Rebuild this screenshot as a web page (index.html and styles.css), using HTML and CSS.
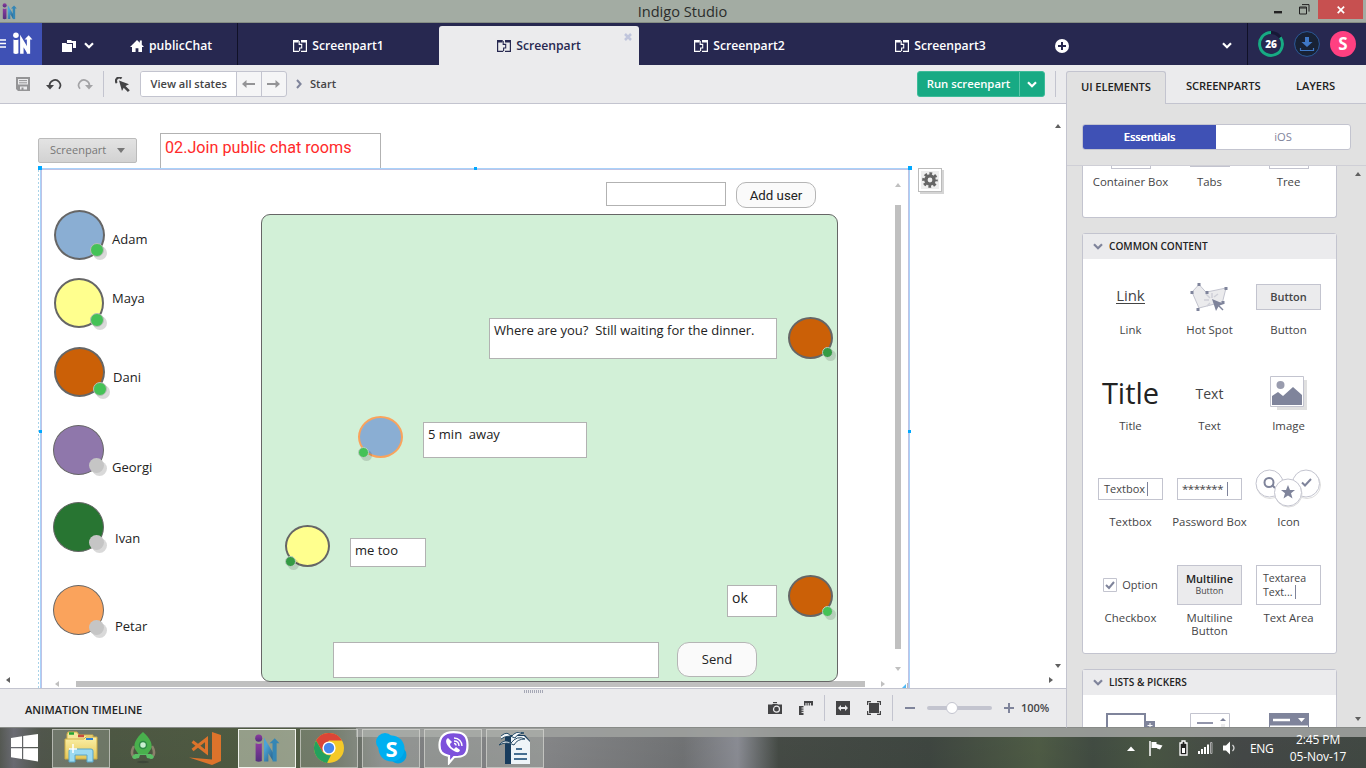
FILE: index.html
```html
<!DOCTYPE html>
<html lang="en">
<head>
<meta charset="utf-8">
<title>Indigo Studio</title>
<link rel="stylesheet" href="styles.css">
</head>
<body>
<svg class="defs" width="0" height="0">
  <defs>
    <linearGradient id="purple" x1="0" y1="0" x2="0" y2="1"><stop offset="0" stop-color="#8d3aa0"/><stop offset="1" stop-color="#54307e"/></linearGradient>
    <linearGradient id="blue" x1="0" y1="0" x2="1" y2="1"><stop offset="0" stop-color="#4ba3d6"/><stop offset="1" stop-color="#24587f"/></linearGradient>
    <linearGradient id="folder" x1="0" y1="0" x2="0" y2="1"><stop offset="0" stop-color="#fbf0a8"/><stop offset="1" stop-color="#e5c757"/></linearGradient>
    <symbol id="logo" viewBox="0 0 24 28">
      <circle class="l1" cx="4" cy="4" r="3.4"/>
      <path class="l1" d="M1 9c2 1 4 1 6 0v17c-2 1-4 1-6 0z"/>
      <path class="l2" d="M11.200 26.500V11l7.800 13" fill="none" stroke-width="4.200"/>
      <path class="l4" d="M19.300 26.500V7" fill="none" stroke-width="4"/>
      <path class="l3" d="M14.500 9l5-5 4.500 5z"/>
    </symbol>
    <symbol id="part" viewBox="0 0 14 12">
      <path d="M5.500.7H.6v10.700h5.600M8 .7h5.400v10.700H8" fill="none" stroke="currentColor" stroke-width="1.200"/>
      <path d="M6.200 1v3.400h2.500v3.600H6.600v3" fill="none" stroke="currentColor" stroke-width="1.100"/>
      <path d="M0 0h5.500v2.500H0zM8 0h6v2.500H8z" fill="currentColor"/>
    </symbol>
    <symbol id="chev" viewBox="0 0 10 7"><path d="M1 1.200l4 4 4-4" fill="none" stroke="currentColor" stroke-width="2.200"/></symbol>
  </defs>
</svg>

<div class="window">
  <header class="titlebar">
    <svg class="app-icon" width="17" height="17"><use href="#logo"/></svg>
    <span class="title">Indigo Studio</span>
    <svg class="win-min" width="9" height="3"><rect width="8" height="2.400" fill="#222"/></svg>
    <svg class="win-max" width="11" height="11"><path d="M.5 3h7v7h-7zM.5 4h7M3 .6h7v7" fill="none" stroke="#222"/></svg>
    <span class="win-close"><svg width="8" height="8"><path d="M.7.7l6.400 6.400M7.100.7L.7 7.100" stroke="#fff" stroke-width="1.700"/></svg></span>
  </header>

  <nav class="nav">
    <div class="brand">
      <svg width="6" height="10"><path d="M0 1h6M0 4.500h6M0 8h6" stroke="#fff" stroke-width="1.700"/></svg>
      <svg class="brand-logo" width="21" height="23"><use href="#logo"/></svg>
    </div>
    <div class="project">
      <svg class="folders" width="14" height="12"><path d="M0 3h4l1 1h5v8H0zM5 0h4l1 1h4v7h-3V3H5z" fill="#fff"/></svg>
      <svg class="chev1" width="10" height="7"><use href="#chev"/></svg>
      <svg class="home" width="14" height="12"><path d="M0 7l7-7 2.800 2.800V.6h2v4.200L14 7h-2v5H8.400V8.300H5.600V12H2V7z" fill="#fff"/></svg>
      <span>publicChat</span>
    </div>
    <div class="tab"><svg width="14" height="12"><use href="#part"/></svg><span>Screenpart1</span></div>
    <div class="tab active"><svg width="14" height="12"><use href="#part"/></svg><span>Screenpart</span>
      <svg class="tab-x" width="8" height="8"><path d="M1 1l6 6M7 1L1 7" stroke="#c0c5dc" stroke-width="2.500"/></svg></div>
    <div class="tab"><svg width="14" height="12"><use href="#part"/></svg><span>Screenpart2</span></div>
    <div class="tab"><svg width="14" height="12"><use href="#part"/></svg><span>Screenpart3</span></div>
    <svg class="plus" width="14" height="14"><circle cx="7" cy="7" r="7" fill="#fff"/><path d="M3 7h8M7 3v8" stroke="#272850" stroke-width="2"/></svg>
    <svg class="chev2" width="10" height="7"><use href="#chev"/></svg>
    <div class="account">
      <div class="days"><svg width="26" height="26"><circle cx="13" cy="13" r="11.400" fill="none" stroke="#161836" stroke-width="3"/><path d="M13 1.600A11.400 11.400 0 1 0 22.300 6.400" fill="none" stroke="#18aa84" stroke-width="3"/></svg><b>26</b></div>
      <svg width="26" height="26"><circle cx="13" cy="13" r="12.400" fill="#182235" stroke="#2c5a99"/><path d="M11 6h4v5h3.500L13 16 7.500 11H11z" fill="#3f78c6"/><path d="M6.500 17v2.500h13V17" fill="none" stroke="#3f78c6" stroke-width="1.200"/></svg>
      <div class="avatar">S</div>
    </div>
  </nav>

  <div class="body">
    <main class="work">
      <div class="toolbar">
        <svg class="save" width="14" height="14"><path d="M0 0h14v14H2l-2-2zM2 2v5.500h10V2zM4 9.500V12.500h1.500v-2h2v2H11v-3z" fill="#949496" fill-rule="evenodd"/><path d="M3 3.600h8M3 5.800h8" stroke="#949496"/></svg>
        <svg class="undo" width="17" height="13"><path d="M4 9A5.300 5.300 0 1 1 13 10.800" fill="none" stroke="#444446" stroke-width="1.700"/><path d="M0 7h8l-4 4.500z" fill="#444446"/></svg>
        <svg class="redo" width="17" height="13"><path d="M13 9A5.300 5.300 0 1 0 4 10.800" fill="none" stroke="#a3a3a6" stroke-width="1.700"/><path d="M17 7H9l4 4.500z" fill="#a3a3a6"/></svg>
        <i class="divider d1"></i>
        <svg class="pointer" width="15" height="15"><path d="M4 3.500l10 3.800-3.500 1.600 4.300 4.300-1.900 1.800-4.200-4.200L7 14z" fill="#444446"/><path d="M1.800 6A3 3 0 0 1 6.500 1.600" fill="none" stroke="#444446" stroke-width="2.200"/></svg>
        <div class="states">
          <span class="view">View all states</span>
          <span class="arrow"><svg width="14" height="8"><path d="M0 4l4.500-4v3H13v2H4.500v3z" fill="#949496"/></svg></span>
          <span class="arrow"><svg width="14" height="8"><path d="M13 4L8.500 0v3H0v2h8.500v3z" fill="#949496"/></svg></span>
        </div>
        <svg class="crumb" width="6" height="10"><path d="M1 1l3.600 4L1 9" fill="none" stroke="#7f849b" stroke-width="2"/></svg>
        <span class="start">Start</span>
        <div class="run"><span>Run screenpart</span><i><svg width="10" height="7"><use href="#chev"/></svg></i></div>
        <i class="divider d2"></i>
      </div>

      <section class="canvas">
        <div class="selector">Screenpart<svg width="8" height="5"><path d="M0 0h8L4 5z" fill="#777"/></svg></div>
        <div class="heading">02.Join public chat rooms</div>
        <div class="dots"></div>
        <div class="frame"></div>
        <i class="handle h1"></i><i class="handle h2"></i><i class="handle h3"></i><i class="handle h4"></i><i class="handle h5"></i>
        <div class="gear"><svg width="18" height="18" viewBox="-9 -9 18 18"><circle r="4.100" fill="none" stroke="#666" stroke-width="3.400"/><circle r="6.300" fill="none" stroke="#666" stroke-width="3" stroke-dasharray="2.700 2.248" stroke-dashoffset="1.350"/></svg></div>

        <div class="user adam"></div><i class="status on s1"></i><span class="name n1">Adam</span>
        <div class="user maya"></div><i class="status on s2"></i><span class="name n2">Maya</span>
        <div class="user dani"></div><i class="status on s3"></i><span class="name n3">Dani</span>
        <div class="user thin georgi"></div><i class="status s4"></i><span class="name n4">Georgi</span>
        <div class="user thin ivan"></div><i class="status s5"></i><span class="name n5">Ivan</span>
        <div class="user thin petar"></div><i class="status s6"></i><span class="name n6">Petar</span>

        <i class="vbar"></i><i class="hbar"></i>
        <div class="field adduser-field"></div>
        <div class="pill adduser">Add user</div>
        <div class="room"></div>
        <div class="field msg m1">Where are you?&nbsp; Still waiting for the dinner.</div>
        <div class="field msg m2">5 min&nbsp; away</div>
        <div class="field msg m3">me too</div>
        <div class="field msg m4">ok</div>
        <div class="field m5"></div>
        <div class="pill send">Send</div>
        <div class="face f1"></div><i class="dot dark p1"></i>
        <div class="face f2"></div><i class="dot p2"></i>
        <div class="face f3"></div><i class="dot dark p3"></i>
        <div class="face f4"></div><i class="dot p4"></i>

        <i class="tri up light t1"></i><i class="tri down light t2"></i><i class="tri left light t3"></i><i class="tri right light t4"></i>
        <i class="tri up t5"></i><i class="tri down t6"></i><i class="tri left t7"></i><i class="tri right t8"></i>
        <svg class="corner" width="6" height="5"><path d="M0 5l4-4v4z" fill="#4fb8f5"/><path d="M5.500 0v5" stroke="#bbb"/></svg>
      </section>

      <footer class="timeline">
        <span class="tl-title">ANIMATION TIMELINE</span>
        <i class="grip"></i>
        <svg class="camera" width="14" height="12"><path d="M0 2.500h3.800L5 2h4l1.200.5H14V12H0z" fill="#444446"/><path d="M5 .6h4" stroke="#444446" stroke-width="1.200"/><circle cx="8.500" cy="7.200" r="3" fill="none" stroke="#ebebed" stroke-width="1.200"/></svg>
        <svg class="rulers" width="14" height="14"><path d="M5 0h9v4.500H5zM0 5h4.500v9H0z" fill="#444446"/><path d="M7 2v3M9.200 2v3M11.400 2v3M2.500 7h3M2.500 9.200h3M2.500 11.400h3" stroke="#ebebed"/></svg>
        <i class="divider"></i>
        <svg class="fitw" width="14" height="14"><rect width="14" height="14" fill="#444446"/><path d="M2 7l3-3v2h4V4l3 3-3 3V8H5v2z" fill="#ebebed"/></svg>
        <svg class="fitall" width="14" height="14"><path d="M.6 4V.6H4M10 .6h3.400V4M13.400 10v3.400H10M4 13.400H.6V10" fill="none" stroke="#444446" stroke-width="1.200"/><rect x="2" y="2" width="10" height="10" fill="#444446"/></svg>
        <i class="divider d4"></i>
        <svg class="minus" width="10" height="10"><path d="M0 5h10" stroke="#7f849b" stroke-width="2"/></svg>
        <div class="slider"><i></i></div>
        <svg class="zplus" width="10" height="10"><path d="M0 5h10M5 0v10" stroke="#7f849b" stroke-width="2"/></svg>
        <span class="zoom">100%</span>
      </footer>
    </main>

    <aside class="side">
      <div class="side-tabs"><span class="on">UI ELEMENTS</span><span class="two">SCREENPARTS</span><span class="three">LAYERS</span></div>
      <div class="seg-wrap"><div class="segment"><b>Essentials</b><span>iOS</span></div></div>
      <div class="scroller">
        <i class="tri up t9"></i><i class="tri down t10"></i>
        <section class="card first">
          <div><i class="stub"></i>Container Box</div><div><i class="stub solid"></i>Tabs</div><div><i class="stub"></i>Tree</div>
        </section>
        <section class="card common">
          <h3><svg width="10" height="7"><use href="#chev"/></svg>COMMON CONTENT</h3>
          <div class="grid">
            <div class="cell"><div class="pic"><span class="link">Link</span></div><p>Link</p></div>
            <div class="cell"><div class="pic"><svg width="40" height="34"><path d="M2 12L9 4.500l7 7.700L36 8l-3.500 14L9 28z" fill="#ebebed" stroke="#c3c4cf"/><path d="M22 13v5M14 20h5M16 14l4 4M28 14l-4 3M17 26l3-3" stroke="#cfd0d8" stroke-width="1.500"/><path d="M7.500 3h3v3h-3zM.5 11h3v3h-3zM15.500 11h3v3h-3zM34.500 7h3v3h-3zM31.500 21h3v3h-3zM6.500 28h3v3h-3z" fill="#7f849b"/><path d="M22 19l12 5-4.500 1.500 4 4-1 1-4-4L26 31z" fill="#7f849b"/></svg></div><p>Hot Spot</p></div>
            <div class="cell"><div class="pic"><span class="btn">Button</span></div><p>Button</p></div>
            <div class="cell"><div class="pic"><span class="big">Title</span></div><p>Title</p></div>
            <div class="cell"><div class="pic"><span class="txt">Text</span></div><p>Text</p></div>
            <div class="cell"><div class="pic"><svg width="37" height="34"><path d="M7 4h30v30H7z" fill="#e0e0e0"/><path d="M.5.5h33v30H.5z" fill="#fff" stroke="#c3c4cf"/><circle cx="10.500" cy="9" r="4" fill="#999cae"/><path d="M2 29V20l6-4 5 4 10-9 9 8v10z" fill="#7f849b"/></svg></div><p>Image</p></div>
            <div class="cell"><div class="pic"><span class="box">Textbox<i></i></span></div><p>Textbox</p></div>
            <div class="cell"><div class="pic"><span class="box pass">*******<i></i></span></div><p>Password Box</p></div>
            <div class="cell"><div class="pic"><svg class="icons" width="66" height="42"><g stroke="#c3c4cf" fill="#fff"><circle cx="15" cy="17" r="13.500" stroke="#ddd"/><circle cx="52" cy="17" r="13.500" stroke="#ddd"/><circle cx="14.500" cy="15.500" r="13.500"/><circle cx="51" cy="15.500" r="13.500"/><circle cx="33.500" cy="25.500" r="13.500" stroke="#ddd"/></g><circle cx="14" cy="14.500" r="4.500" fill="none" stroke="#7f849b" stroke-width="2"/><path d="M17 17l3 3" stroke="#7f849b" stroke-width="2"/><path d="M47 14.500l3 3 6-6.500" fill="none" stroke="#7f849b" stroke-width="2"/><circle cx="33" cy="24.500" r="13.500" fill="#fff" stroke="#c3c4cf"/><path d="M33 17l2 5h5l-4 3.300 1.500 5.200L33 27.500l-4.500 3 1.500-5.200-4-3.300h5z" fill="#7f849b"/></svg></div><p>Icon</p></div>
            <div class="cell"><div class="pic"><span class="check"><svg width="14" height="14"><path d="M.5.5h13v13H.5z" fill="#fff" stroke="#c3c4cf"/><path d="M3 7l3 3 5-6" fill="none" stroke="#7f849b" stroke-width="2"/></svg>Option</span></div><p>Checkbox</p></div>
            <div class="cell"><div class="pic"><span class="btn multi"><b>Multiline</b><small>Button</small></span></div><p>Multiline<br>Button</p></div>
            <div class="cell"><div class="pic"><span class="area">Textarea<br>Text...<i></i></span></div><p>Text Area</p></div>
          </div>
        </section>
        <section class="card lists">
          <h3><svg width="10" height="7"><use href="#chev"/></svg>LISTS &amp; PICKERS</h3>
          <div class="peek">
            <svg width="50" height="16"><path d="M1 16V1h38v15" fill="none" stroke="#7f849b" stroke-width="2"/><path d="M39 8h10v8H39z" fill="#7f849b"/><path d="M41.500 12.500h5M44 10v5" stroke="#fff"/></svg>
            <svg class="pk2" width="40" height="16"><path d="M.5 16V.5h39V16" fill="none" stroke="#c3c4cf"/><path d="M7 10h16" stroke="#9295aa" stroke-width="2"/><path d="M30 8l3-3 3 3z" fill="#7f849b"/><path d="M31 11h4v5h-4z" fill="#ebebed"/></svg>
            <svg class="pk3" width="40" height="16"><path d="M0 0h40v16H0z" fill="#7f849b"/><path d="M4 7h17" stroke="#fff" stroke-width="2.500"/><path d="M29 5h7l-3.500 4z" fill="#fff"/><path d="M1 12.500h38V16H1z" fill="#fff"/></svg>
          </div>
        </section>
      </div>
    </aside>
  </div>

  <div class="taskbar">
    <div class="glass"></div>
    <div class="task win"><svg width="27" height="28"><path d="M0 4l11-1.700V13H0zM12.200 2.100L27 0v13H12.200zM0 14.200h11V25L0 23.300zM12.200 14.200H27V27.400L12.200 25z" fill="#fff"/></svg></div>
    <div class="task open"><svg width="34" height="34"><path d="M3 3l1-2h9l2 3h14v22H3z" fill="#f5e79b" stroke="#cfae45"/><path d="M5 2.500h5" stroke="#23a434" stroke-width="2.500"/><path d="M14 5h6" stroke="#c94b3c" stroke-width="2.500"/><path d="M1 8h19l2-2h11v22H1z" fill="url(#folder)" stroke="#cfae45"/><path d="M22 8h7" stroke="#2f7fd0" stroke-width="2"/><path d="M5 31V20q0-2 2-2h20q2 0 2 2v11h-6v-7H11v7z" fill="#9cdaf0" stroke="#5ba6c8"/><path d="M9 13v9M5 18h8" stroke="#fff" stroke-width="1.500"/></svg></div>
    <div class="task"><svg width="26" height="34"><path d="M4 15q-5 9 2 12M22 15q5 9-2 12" fill="none" stroke="#8b806b" stroke-width="2.500"/><path d="M13 1c7 6 10 12 8 17l-4 6H9l-4-6C3 13 6 7 13 1z" fill="#49b04d"/><path d="M5 23q-5 3-1 5l5-1 1-3h6l1 3 5 1q4-2-1-5z" fill="#59bf65"/><circle cx="13" cy="14" r="3.500" fill="#c9efd1" stroke="#2e8b45" stroke-width="1.500"/><ellipse cx="13" cy="31" rx="6" ry="1.200" fill="#3e4639"/></svg></div>
    <div class="task"><svg width="33" height="33"><path d="M23 0l9 3v26l-9 4L0 25.500l23 2z" fill="#dd732b"/><path d="M3.500 9.500l14 11V7L3.500 18" fill="none" stroke="#dd732b" stroke-width="3"/></svg></div>
    <div class="task open current"><svg width="26" height="29"><use href="#logo"/></svg></div>
    <div class="task open"><svg width="30" height="30" viewBox="-15 -15 30 30"><circle r="15" fill="#f4c928"/><path d="M-13-7.500A15 15 0 0 1 13-7.500H0L-6.500 3.800z" fill="#db4537"/><path d="M-13-7.500L-6.500 3.800Q-3 8 2 7L-2 14.900A15 15 0 0 1-13-7.500z" fill="#24a15d"/><circle r="6.600" fill="#fff"/><circle r="5.200" fill="#4687ee"/></svg></div>
    <div class="task open"><svg width="31" height="31"><circle cx="9" cy="9" r="9" fill="#00aff0"/><circle cx="22" cy="22" r="8.500" fill="#00a2e4"/><circle cx="15.500" cy="15.500" r="13" fill="#00aff0"/><text x="15.500" y="23.500" text-anchor="middle" class="skype">S</text></svg></div>
    <div class="task open"><svg width="31" height="34"><path d="M15.500 1.200C25 1.200 29.500 4 29.500 14S26 26 16 26l-5 6v-7C4 23.500 1.500 21 1.500 14S5 1.200 15.500 1.200z" fill="#7d51dc" stroke="#fff" stroke-width="2.200"/><path d="M10 7c-4 2-1 8 3 11s8 5 9 1l-4-3-2 2c-2-1-4-3-4-5l2-2z" fill="#fff"/><path d="M16 7c5 0 8 4 8 8M16 10c3 0 5 2 5 5M16 12.500q2 0 2 2" fill="none" stroke="#fff" stroke-width="1.400"/></svg></div>
    <div class="task open"><svg width="33" height="33"><path d="M6 3h20l5 6v23H6z" fill="#183c5d"/><path d="M12 4h13l6 6v22H12z" fill="#eef4f8"/><path d="M17 17h6M15 22h13M15 27h13" stroke="#456e91" stroke-width="2"/><path d="M2 4q7-6 10 1 5-7 13-4-7 1-9 5-7-4-14 1M0 13q6-7 12-2 6-8 14-4-8 0-11 6-7-4-15 0z" fill="#f5f8fa" stroke="#244965"/></svg></div>
    <div class="tray">
      <svg class="tr1" width="8" height="5"><path d="M0 5l4-4.500L8 5z" fill="#fff"/></svg>
      <svg class="tr2" width="15" height="15"><path d="M1 0v15" stroke="#fff" stroke-width="1.500"/><path d="M2.500 1h5v2l6 1.500-2.500 4-3-1V7h-5.500z" fill="#fff"/></svg>
      <svg class="tr3" width="9" height="16"><path d="M3 1h3v2h2v12H1V3h2z" fill="#222" stroke="#fff" stroke-width="1.300"/><path d="M3 8h3v5H3z" fill="#fff"/></svg>
      <svg class="tr4" width="15" height="12"><path d="M0 9h2v3H0zM3 7h2v5H3zM6 5h2v7H6zM9 2.500h2V12H9z" fill="#fff"/><path d="M12.500.5h1.500v11h-1.500z" fill="none" stroke="#aaa"/></svg>
      <svg class="tr5" width="13" height="14"><path d="M0 4.500h3L7 .5v13l-4-4H0z" fill="#fff"/><path d="M9.500 4q3 3 0 6" fill="none" stroke="#ddd" stroke-width="1.200"/></svg>
      <span class="lang">ENG</span>
      <div class="clock">2:45 PM<br>05-Nov-17</div>
    </div>
  </div>
</div>
</body>
</html>
```

FILE: styles.css
```css
* { box-sizing: border-box; }
body { margin: 0; width: 1366px; height: 768px; overflow: hidden; font: 12px "Open Sans", sans-serif; color: #444446; background: #fff; }
svg { display: block; flex: none; }
i { font-style: normal; }
.defs { position: absolute; }
.window { display: flex; flex-direction: column; height: 768px; }
.l1 { fill: url(#purple); }
.l2 { stroke: url(#blue); }
.l3 { fill: #3586b5; }
.l4 { stroke: #3586b5; }

/* title bar */
.titlebar { height: 23px; background: #a3aca3; border-bottom: 1px solid #858d84; display: flex; align-items: flex-start; flex: none; }
.app-icon { margin: 3px 0 0 1px; }
.title { width: 1256px; padding-left: 73px; margin-right: -18px; text-align: center; font-size: 14.6px; line-height: 23px; color: #2b2c2b; }
.win-min { margin: 11px 0 0 18px; }
.win-max { margin: 4px 0 0 16px; }
.win-close { width: 45px; height: 19px; background: #c75050; margin-left: 8px; display: flex; align-items: center; justify-content: center; }

/* navigation */
.nav { height: 42px; background: #272850; display: flex; flex: none; color: #fff; align-items: center; font-weight: 600; font-size: 12.2px; }
.brand { width: 42px; height: 42px; background: #3f51b5; display: flex; align-items: center; gap: 6px; }
.brand svg { margin-bottom: 1px; }
.brand .brand-logo { filter: brightness(0) invert(1); }
.project { width: 196px; height: 42px; border-right: 1px solid #101127; display: flex; align-items: center; padding-left: 20px; padding-top: 3px; flex: none; }
.chev1 { margin-left: 8px; }
.home { margin: 0 5px 0 36px; }
.tab { width: 201px; height: 42px; display: flex; align-items: center; justify-content: center; gap: 5px; padding-top: 3px; position: relative; flex: none; }
.tab.active { background: #ebebed; color: #272850; width: 200px; height: 39px; margin-top: 3px; padding-top: 0; border-radius: 3px 3px 0 0; }
.tab-x { position: absolute; right: 7px; top: 7px; }
.plus { margin-left: 14px; margin-top: 3px; }
.chev2 { margin-left: 153px; margin-top: 3px; }
.account { margin-left: 15px; border-left: 1px solid #101127; height: 42px; display: flex; gap: 10px; padding-left: 10px; align-items: center; }
.days { position: relative; }
.days b { position: absolute; inset: 0; text-align: center; line-height: 26px; font-size: 10px; }
.avatar { width: 26px; height: 26px; border-radius: 50%; background: #ff4081; text-align: center; font: 700 17px/26px "Open Sans", sans-serif; }

.body { display: flex; height: 663px; flex: none; }
.work { width: 1066px; display: flex; flex-direction: column; }

/* toolbar */
.toolbar { height: 39px; background: #ebebed; border-bottom: 1px solid #c3c4cf; display: flex; align-items: center; flex: none; font-weight: 600; font-size: 11.1px; }
.divider { width: 1px; height: 26px; background: #c3c4cf; flex: none; }
.save { margin-left: 16px; }
.undo { margin-left: 16px; }
.redo { margin-left: 13px; }
.d1 { margin-left: 10px; }
.pointer { margin-left: 11px; }
.states { margin-left: 10px; display: flex; width: 147px; height: 26px; border: 1px solid #c3c4cf; border-radius: 3px; background: #f5f5f6; overflow: hidden; }
.view { width: 96px; background: #fff; line-height: 24px; text-align: center; white-space: nowrap; }
.arrow { width: 25px; border-left: 1px solid #c3c4cf; display: flex; align-items: center; justify-content: center; }
.crumb { margin-left: 9px; }
.start { margin-left: 8px; width: 30px; margin-top: -1px; }
.run { width: 128px; height: 26px; margin-left: auto; background: #18aa84; border: 1px solid #3dbb99; border-radius: 3px; color: #fff; display: flex; align-items: center; }
.run span { width: 101px; text-align: center; font-size: 11.3px; white-space: nowrap; padding-bottom: 1px; }
.run i { border-left: 1px solid #5ac7a9; height: 24px; flex: 1; display: flex; align-items: center; justify-content: center; }
.d2 { margin: 0 10px; }

/* design surface: a free canvas */
.canvas { height: 584px; position: relative; overflow: hidden; background: #fff; font-size: 13px; color: #222; }
.canvas > * { position: absolute; }
.selector { left: 38px; top: 34px; width: 99px; height: 25px; border: 1px solid #bbb; border-radius: 2px; background: linear-gradient(#e3e3e3, #d2d2d2); color: #777; font-size: 11px; display: flex; align-items: center; padding-left: 11px; padding-bottom: 2px; gap: 11px; }
.selector svg { margin-top: 2px; }
.heading { left: 160px; top: 29px; width: 221px; height: 36px; border: 1px solid #b2b2b2; color: #ff2a2a; font: 16.17px/27px Roboto, sans-serif; padding-left: 4px; white-space: nowrap; }
.dots { left: 38px; top: 66px; width: 1px; height: 520px; background: repeating-linear-gradient(#a9d3e8 0 2px, #fff 2px 4px); }
.frame { left: 40px; top: 64px; width: 870px; height: 530px; border: 1px solid #a9d2fa; box-shadow: inset 0 0 0 1px #bfc3e4; }
.handle { width: 4px; height: 4px; background: #00a8ff; }
.h1 { left: 38px; top: 62px; } .h2 { left: 474px; top: 63px; width: 3px; height: 3px; } .h3 { left: 908px; top: 62px; }
.h4 { left: 39px; top: 326px; width: 3px; height: 3px; } .h5 { left: 908px; top: 326px; width: 3px; height: 3px; }
.gear { left: 918px; top: 64px; width: 24px; height: 24px; border: 1px solid #bbb; box-shadow: 2px 2px #d5d5d5, inset 0 0 0 2px #fff; background: #eee; display: flex; align-items: center; justify-content: center; }
.user { width: 51px; height: 50px; border: 2px solid #666; border-radius: 50%; }
.user.thin { border-width: 1px; }
.adam { left: 54px; top: 106px; background: #8aaed3; }
.maya { left: 54px; top: 174px; width: 50px; background: #ffff8e; }
.dani { left: 54px; top: 243px; background: #cb6007; }
.georgi { left: 53px; top: 321px; background: #8f77ab; }
.ivan { left: 53px; top: 398px; background: #287532; }
.petar { left: 53px; top: 481px; background: #faa35c; }
.status { width: 15px; height: 15px; border-radius: 50%; background: #c5c5c5; box-shadow: 3px 3px rgba(0,0,0,.15); }
.status.on { width: 14px; height: 14px; background: #45c257; border: 1px solid #bbb; }
.s1 { left: 90px; top: 139px; } .s2 { left: 90px; top: 209px; } .s3 { left: 93px; top: 278px; }
.s4 { left: 89px; top: 354px; } .s5 { left: 89px; top: 431px; } .s6 { left: 89px; top: 516px; }
.name { line-height: 18px; }
.n1 { left: 112px; top: 126px; } .n2 { left: 112px; top: 185px; } .n3 { left: 113px; top: 264px; }
.n4 { left: 112px; top: 354px; } .n5 { left: 115px; top: 425px; } .n6 { left: 115px; top: 513px; }
.room { left: 261px; top: 110px; width: 577px; height: 468px; background: #d2f0d7; border: 1px solid #666; border-radius: 9px; }
.field { border: 1px solid #b2b2b2; background: #fff; }
.msg { padding-left: 4px; line-height: 23px; white-space: nowrap; }
.adduser-field { left: 606px; top: 78px; width: 120px; height: 24px; }
.m1 { left: 489px; top: 214px; width: 288px; height: 41px; }
.m2 { left: 423px; top: 318px; width: 164px; height: 36px; }
.m3 { left: 350px; top: 434px; width: 76px; height: 29px; }
.m4 { left: 727px; top: 481px; width: 50px; height: 32px; font-size: 14px; }
.m5 { left: 333px; top: 538px; width: 326px; height: 36px; }
.pill { border: 1px solid #b5b5b5; background: #fafafa; text-align: center; }
.adduser { left: 736px; top: 78px; width: 80px; height: 26px; border-radius: 10px; font: 13.3px/25px Roboto, sans-serif; }
.send { left: 677px; top: 538px; width: 80px; height: 35px; border-radius: 12px; line-height: 33px; }
.face { width: 45px; height: 42px; border: 2px solid #666; border-radius: 50%; background: #cb6007; }
.f1 { left: 788px; top: 213px; } .f4 { left: 788px; top: 471px; }
.f2 { left: 358px; top: 312px; background: #8aaed3; border-color: #faa35c; }
.f3 { left: 285px; top: 421px; background: #ffff8e; }
.dot { width: 11px; height: 11px; border-radius: 50%; background: #45c257; border: 1px solid #bcccc0; box-shadow: 3px 3px rgba(0,0,0,.13); }
.dot.dark { background: #349b44; }
.p1 { left: 822px; top: 243px; } .p2 { left: 358px; top: 343px; } .p3 { left: 285px; top: 452px; } .p4 { left: 822px; top: 502px; }
.vbar { left: 895px; top: 101px; width: 6px; height: 444px; background: #c0c0c0; }
.hbar { left: 76px; top: 577px; width: 789px; height: 6px; background: #c0c0c0; }
.tri { color: #606060; border: 3px solid transparent; width: 0; height: 0; position: absolute; }
.tri.light { color: #c0c0c0; }
.up { border-bottom: 4px solid currentColor; border-top: 0; }
.down { border-top: 4px solid currentColor; border-bottom: 0; }
.left { border-right: 4px solid currentColor; border-left: 0; }
.right { border-left: 4px solid currentColor; border-right: 0; }
.t1 { left: 895px; top: 79px; } .t2 { left: 895px; top: 563px; } .t3 { left: 55px; top: 577px; } .t4 { left: 881px; top: 577px; }
.t5 { left: 1055px; top: 20px; } .t6 { left: 1055px; top: 560px; } .t7 { left: 6px; top: 573px; } .t8 { left: 1049px; top: 573px; }
.corner { left: 902px; top: 579px; }

/* animation timeline */
.timeline { height: 40px; background: #ebebed; border-top: 1px solid #c3c4cf; border-bottom: 1px solid #888b88; display: flex; align-items: center; flex: none; }
.tl-title { padding-left: 25px; padding-top: 3px; font-size: 11.1px; font-weight: 600; color: #222; width: 524px; flex: none; }
.grip { width: 19px; height: 3px; background: repeating-linear-gradient(90deg, #a5a7b5 0 1px, transparent 1px 2px); align-self: flex-start; margin: 1px 225px 0 0; flex: none; }
.rulers { margin: 0 11px 0 17px; }
.fitw { margin: 0 17px 0 11px; }
.d4 { margin: 0 12px 0 11px; }
.minus { margin-right: 12px; }
.slider { width: 65px; height: 4px; border-radius: 2px; background: #c3c4cf; margin-right: 12px; display: flex; align-items: center; padding-left: 19px; flex: none; }
.slider i { width: 12px; height: 12px; flex: none; border-radius: 50%; background: #fff; border: 1px solid #c3c4cf; }
.zoom { margin-left: 7px; font-weight: 600; font-size: 11px; margin-top: -1px; }

/* element palette */
.side { width: 300px; background: #e1e1e1; border-left: 1px solid #c3c4cf; display: flex; flex-direction: column; border-bottom: 1px solid #888b88; }
.side-tabs { height: 39px; background: #ebebed; border-bottom: 1px solid #c3c4cf; display: flex; align-items: flex-end; flex: none; color: #222; font-weight: 600; font-size: 11.2px; line-height: 30px; margin-left: -1px; letter-spacing: -.1px; }
.side-tabs .on { width: 100px; height: 33px; background: #e1e1e1; border: 1px solid #c3c4cf; border-bottom: 0; border-radius: 3px 3px 0 0; margin-bottom: -1px; padding-left: 14px; }
.side-tabs span { height: 32px; white-space: nowrap; }
.two { margin-left: 20px; width: 110px; }
.seg-wrap { height: 62px; padding: 20px 15px; border-bottom: 1px solid #cfcfd6; flex: none; }
.segment { width: 269px; height: 26px; display: flex; border: 1px solid #c3c4cf; border-radius: 3px; overflow: hidden; background: #fff; text-align: center; line-height: 24px; font-size: 11.2px; color: #7f849b; font-weight: 600; }
.segment b { width: 133px; background: #3f51b5; color: #fff; font-weight: 600; text-shadow: 0 0 .4px #fff; letter-spacing: -.2px; }
.segment span { flex: 1; font-weight: 500; }
.scroller { position: relative; flex: 1; overflow: hidden; padding-left: 15px; display: flex; flex-direction: column; gap: 15px; font-size: 11.4px; }
.t9 { left: 288px; top: 6px; } .t10 { left: 288px; top: 551px; }
.card { width: 255px; border: 1px solid #c3c4cf; border-radius: 3px; background: #fff; flex: none; }
.card.first { border-top: 0; border-radius: 0 0 3px 3px; height: 52px; display: grid; grid-template-columns: repeat(3, 79px); padding-left: 8px; text-align: center; line-height: 26px; white-space: nowrap; }
.stub { display: block; width: 40px; height: 3px; margin: 0 auto; border: 1px solid #c3c4cf; border-top: 0; }
.stub.solid { border: 0; background: #c3c4cf; height: 1px; margin-bottom: 2px; }
.card h3 { margin: 0; height: 25px; background: #ebebed; display: flex; align-items: center; gap: 6px; padding: 0 0 1px 10px; font-size: 10.1px; font-weight: 600; color: #222; }
.card h3 svg { color: #7f849b; }
.common { height: 421px; }
.grid { display: grid; grid-template-columns: repeat(3, 79px); grid-auto-rows: 96px; padding-left: 8px; }
.cell { padding-top: 17px; }
.pic { height: 42px; display: flex; align-items: center; justify-content: center; margin-bottom: 5px; }
.cell p { margin: 0; text-align: center; line-height: 13px; white-space: nowrap; }
.link { font-size: 15px; border-bottom: 1px solid #444; line-height: 16px; font-weight: 500; letter-spacing: -.1px; margin-top: -3px; }
.btn { width: 65px; height: 26px; border: 1px solid #c3c4cf; background: #ebebed; font-weight: 600; line-height: 24px; text-align: center; font-size: 11px; }
.big { font-size: 29px; color: #222; line-height: 40px; }
.txt { font-size: 14px; }
.icons { position: relative; left: -.5px; }
.box { width: 65px; height: 22px; border: 1px solid #c3c4cf; background: #fff; padding: 0 0 1px 5px; display: flex; align-items: center; font-size: 11px; }
.box i { height: 14px; border-left: 1px solid #7f849b; margin-left: 2px; }
.pass { padding-left: 4px; letter-spacing: -.4px; font-size: 11.400px; }
.pass i { margin-left: 4px; }
.check { display: flex; align-items: center; gap: 5px; margin-top: -1px; font-size: 11px; }
.multi { height: 40px; display: flex; flex-direction: column; line-height: 12px; padding-top: 6px; }
.multi b { color: #222; font-weight: 600; font-size: 11px; line-height: 13px; }
.multi small { font-size: 8.8px; font-weight: 400; line-height: 12px; }
.area { width: 65px; height: 40px; border: 1px solid #c3c4cf; padding: 5px 0 0 6px; font-size: 10.6px; line-height: 14px; }
.area i { display: inline-block; height: 14px; border-left: 1px solid #7f849b; margin-left: 3px; vertical-align: -3px; }
.lists { height: 120px; }
.peek { display: flex; padding: 18px 0 0 23px; }
.pk2 { margin-left: 34px; }
.pk3 { margin-left: 39px; }

/* desktop taskbar */
.taskbar { height: 40px; display: flex; align-items: center; position: relative; background: linear-gradient(rgba(0,0,0,.05), rgba(0,0,0,.08)), linear-gradient(90deg, #5a5e58 0, #71727a 1%, #555b50 3%, #515c47 8%, #536044 20%, #59634e 24%, #858788 28%, #8c8d8f 40%, #77797b 50%, #92949c 54%, #494f49 57%, #424a44 68%, #536149 76%, #455046 80%, #4d5b47 84%, #484c4b 91%, #454d47 100%); }
.glass { position: absolute; left: 356px; right: 0; top: 0; height: 9px; background: rgba(158,161,158,.9); }
.task { width: 58px; height: 39px; margin-right: 4px; display: flex; align-items: center; justify-content: center; position: relative; flex: none; }
.win { width: 52px; margin-right: 0; padding-right: 3px; }
.open { background: rgba(190,195,185,.3); border: 1px solid rgba(225,225,220,.6); }
.current { background: rgba(220,225,210,.5); border-color: #f0f2ec; }
.skype { font: 700 22px "Open Sans", sans-serif; fill: #fff; }
.tray { position: relative; display: flex; align-items: center; color: #fff; margin-left: auto; width: 239px; font-size: 12px; }
.tr2 { margin-left: 14px; }
.tr3 { margin-left: 15px; }
.tr4 { margin-left: 10px; }
.tr5 { margin-left: 10px; }
.lang { margin-left: 14px; width: 37px; letter-spacing: -.3px; }
.clock { flex: none; width: 62px; text-align: center; line-height: 17px; letter-spacing: -.1px; white-space: nowrap; }
```
